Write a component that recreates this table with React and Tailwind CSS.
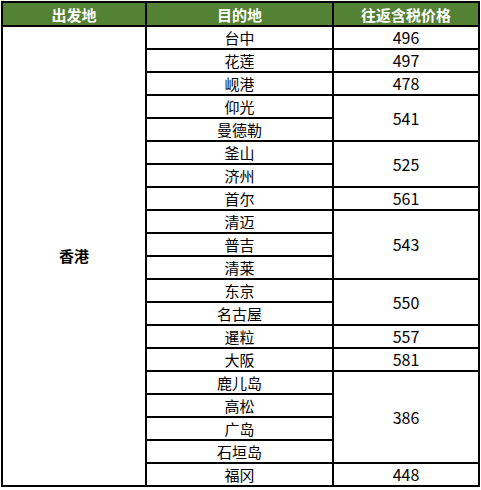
import React from 'react';

const groups = [
  { price: '496', cities: ['台中'] },
  { price: '497', cities: ['花莲'] },
  { price: '478', cities: ['岘港'] },
  { price: '541', cities: ['仰光', '曼德勒'] },
  { price: '525', cities: ['釜山', '济州'] },
  { price: '561', cities: ['首尔'] },
  { price: '543', cities: ['清迈', '普吉', '清莱'] },
  { price: '550', cities: ['东京', '名古屋'] },
  { price: '557', cities: ['暹粒'] },
  { price: '581', cities: ['大阪'] },
  { price: '386', cities: ['鹿儿岛', '高松', '广岛', '石垣岛'] },
  { price: '448', cities: ['福冈'] },
];

const total = groups.reduce((n, g) => n + g.cities.length, 0);

export default function App() {
  const rows = [];
  groups.forEach((g, gi) => {
    g.cities.forEach((c, ci) => {
      rows.push(
        <tr key={c} className="h-[23px]">
          {gi === 0 && ci === 0 && (
            <td rowSpan={total} className="border-2 border-black text-center font-bold text-[15px]">
              香港
            </td>
          )}
          <td className="border-2 border-black text-center p-0 leading-[19px] text-[15px]">{c}</td>
          {ci === 0 && (
            <td rowSpan={g.cities.length} className="border-2 border-black text-center p-0 text-[16px] leading-[19px]">
              {g.price}
            </td>
          )}
        </tr>
      );
    });
  });

  return (
    <div className="w-[481px] h-[490px] bg-white pl-[1px] pt-[1px] overflow-hidden" style={{ fontFamily: '"Noto Sans CJK SC", "Noto Sans", sans-serif' }}>
      <table className="border-collapse text-black table-fixed w-[477px]">
        <colgroup>
          <col className="w-[144px]" />
          <col className="w-[187px]" />
          <col className="w-[146px]" />
        </colgroup>
        <thead>
          <tr className="h-[24px] bg-[#548235] text-white font-bold text-[15px]">
            <th className="border-2 border-black p-0 leading-[19px]">出发地</th>
            <th className="border-2 border-black p-0 leading-[19px]">目的地</th>
            <th className="border-2 border-black p-0 leading-[19px]">往返含税价格</th>
          </tr>
        </thead>
        <tbody>{rows}</tbody>
      </table>
    </div>
  );
}
